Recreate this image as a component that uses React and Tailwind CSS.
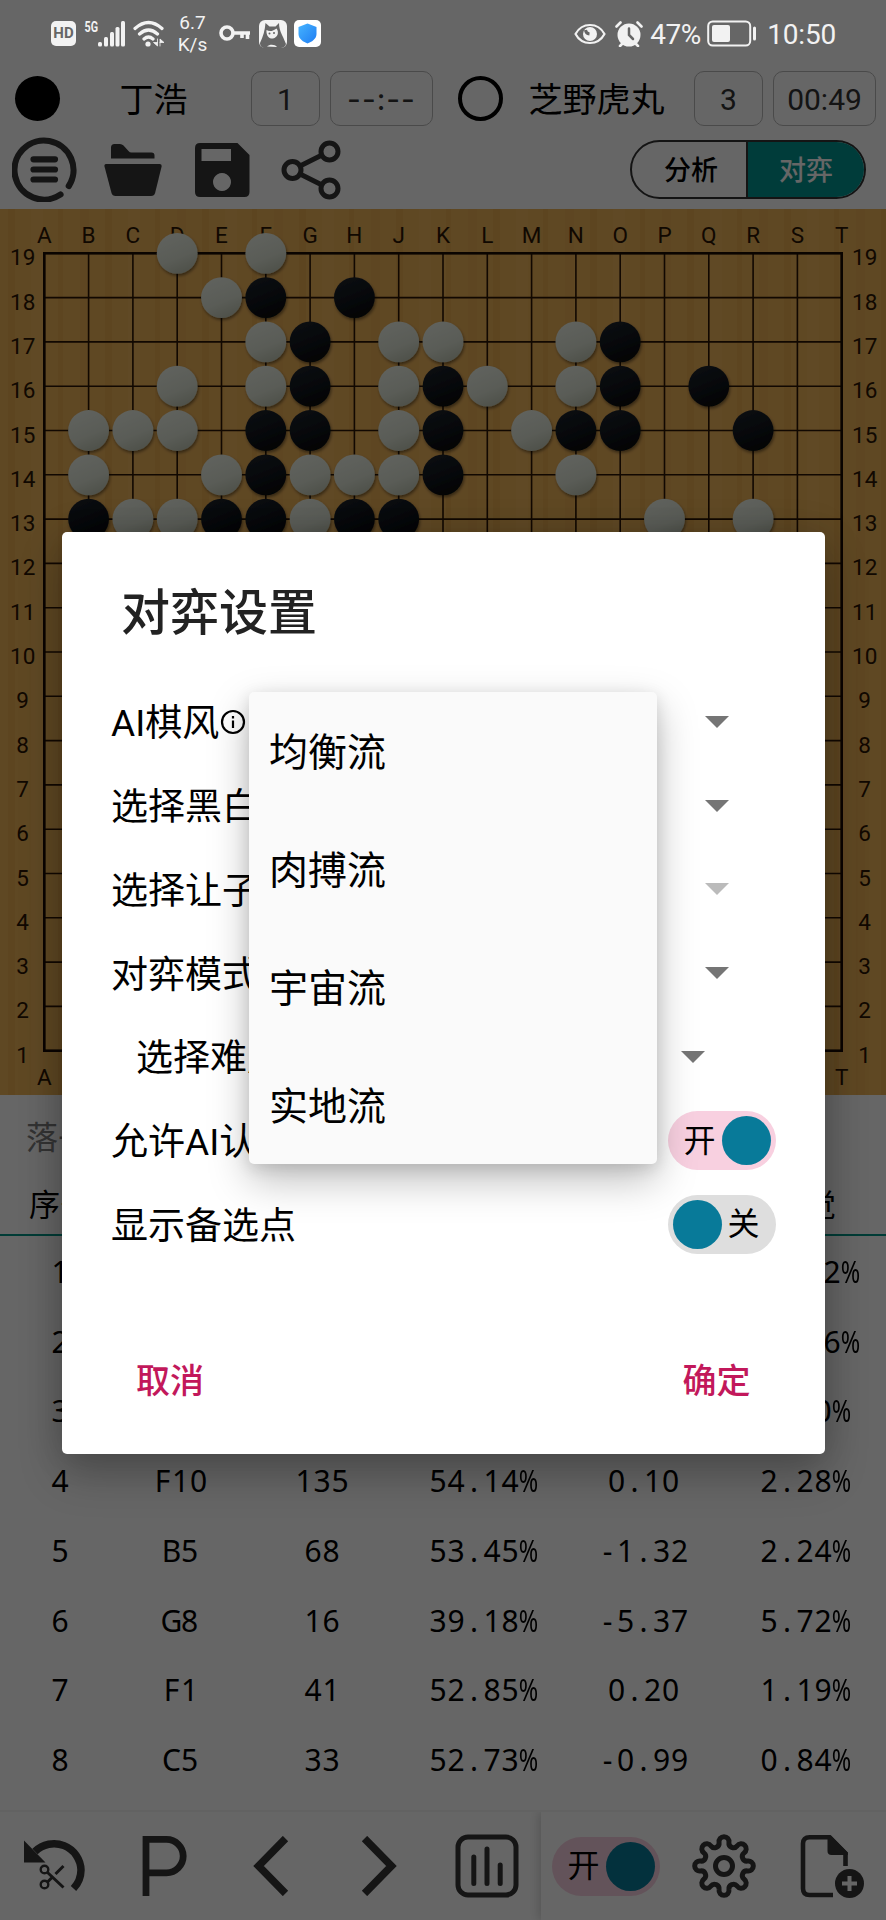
import React from 'react';
import clsx from 'clsx';

const CELL = 44.3;
const COLS = 'ABCDEFGHJKLMNOPQRST'.split('');
const ROWS = Array.from({ length: 19 }, (_, i) => 19 - i);

const STONES = [
  { row: 19, white: 'DF', black: '' },
  { row: 18, white: 'E', black: 'FH' },
  { row: 17, white: 'FJKN', black: 'GO' },
  { row: 16, white: 'DFJLN', black: 'GKOQ' },
  { row: 15, white: 'BCDJM', black: 'FGKNOR' },
  { row: 14, white: 'BEGHJN', black: 'FK' },
  { row: 13, white: 'CDGPR', black: 'BEFHJ' },
];

const MOVES = [
  ['1', '', '', '', '', '12.32%'],
  ['2', '', '', '', '', '10.56%'],
  ['3', '', '', '', '', '3.10%'],
  ['4', 'F10', '135', '54.14%', '0.10', '2.28%'],
  ['5', 'B5', '68', '53.45%', '-1.32', '2.24%'],
  ['6', 'G8', '16', '39.18%', '-5.37', '5.72%'],
  ['7', 'F1', '41', '52.85%', '0.20', '1.19%'],
  ['8', 'C5', '33', '52.73%', '-0.99', '0.84%'],
];

const STYLES = ['均衡流', '肉搏流', '宇宙流', '实地流'];

const StatusBar = () => (
  <div className="relative z-20 h-[66px] flex items-center justify-between pl-[51px] pr-[50px] text-[#f2f2f2]">
    <div className="flex items-center">
      <div className="w-[25px] h-[25px] rounded-[5px] bg-[#f2f2f2] text-[#666] text-[15px] font-bold flex items-center justify-center mt-px">HD</div>
      <svg width="42" height="28" viewBox="0 0 42 28" className="ml-2 mt-px" fill="currentColor">
        <text x="0.5" y="12" fontSize="15" fontWeight="700" textLength="13.5" lengthAdjust="spacingAndGlyphs">5G</text>
        <rect x="14" y="22" width="4" height="4.500" rx="1.500" />
        <rect x="20" y="17" width="4" height="9.500" rx="1.500" />
        <rect x="26" y="12" width="4" height="14.500" rx="1.500" />
        <rect x="31.500" y="7" width="4" height="19.500" rx="1.500" />
        <rect x="37" y="1" width="4" height="25.500" rx="1.500" />
      </svg>
      <svg width="32" height="28" viewBox="0 0 32 28" className="ml-[7px] mt-px" fill="none" stroke="currentColor" strokeWidth="3.200" strokeLinecap="round">
        <path d="M2 8.500Q15.500 -3.500 29 8.500M6.500 14Q15.500 6 24.500 14M11 19Q15.500 15 20 19" />
        <circle cx="15" cy="24" r="2.600" fill="currentColor" stroke="none" />
        <path d="M24.500 19v7l-4-3.500h4M27 26v-7l4 3.500h-4" fill="currentColor" strokeWidth="0.800" />
      </svg>
      <div className="ml-3 mt-[2px] w-[31px] text-center text-[19px] leading-[22px]">
        <div>6.7</div>
        <div>K/s</div>
      </div>
      <svg width="32" height="18" viewBox="0 0 32 18" className="ml-[11px]" fill="none" stroke="currentColor" strokeWidth="3.600">
        <circle cx="8" cy="9" r="6" />
        <path d="M14 9h17M28.500 9v6M23 9v5" />
      </svg>
      <svg width="28" height="28" viewBox="0 0 28 28" className="ml-2 mt-px">
        <rect width="28" height="28" rx="6" fill="#f2f2f2" />
        <path d="M1 23C4 17 6 10 6.500 3l4 3.500h6L20 3c0 4 1 8 3 12s3 7 4 9c-1 3-3 4-5 4H6c-3 0-5-2-5-5z" fill="#666" />
        <path d="M7.500 10c3 2 7 1 10-1.500 3 4 1 9-3.500 10-4 .5-7-3-6.500-8.500z" fill="#f2f2f2" />
        <circle cx="10.500" cy="13.500" r="1" fill="#666" />
        <circle cx="15" cy="13" r="1" fill="#666" />
        <path d="M8 26.500c3-2.500 8-2 10 .5z" fill="#f2f2f2" />
      </svg>
      <div className="ml-[7px] mt-px w-[27px] h-[27px] rounded-[5px] bg-white flex items-center justify-center">
        <svg width="19" height="21" viewBox="0 0 19 21">
          <defs>
            <linearGradient id="shield" x1="0" y1="0" x2="1" y2="1">
              <stop offset="0" stopColor="#46b4ff" />
              <stop offset="1" stopColor="#1f7cf2" />
            </linearGradient>
          </defs>
          <path d="M9.500 0.500L18.500 4v7c0 5-5 8-9 9.500C5.500 19 .5 16 .5 11V4z" fill="url(#shield)" />
        </svg>
      </div>
    </div>

    <div className="flex items-center mt-px">
      <svg width="32" height="22" viewBox="0 0 32 22" fill="none" stroke="currentColor" strokeWidth="2.200" strokeLinejoin="round">
        <path d="M1.500 11C8-1 24-1 30.500 11C24 23 8 23 1.500 11z" />
        <circle cx="16" cy="11" r="7" fill="currentColor" stroke="none" />
        <path d="M11.500 7a4.500 4.500 0 0 0 4 4" stroke="#666" strokeWidth="3" />
      </svg>
      <svg width="28" height="26" viewBox="0 0 28 26" className="ml-[9px]">
        <circle cx="14" cy="14" r="11.500" fill="currentColor" />
        <path d="M1.500 5.500l4-4M26.500 5.500l-4-4M5 25l3-3M23 25l-3-3" stroke="currentColor" strokeWidth="2.600" strokeLinecap="round" />
        <path d="M14 7.500V14l4 4" fill="none" stroke="#666" strokeWidth="2.500" strokeLinecap="round" />
      </svg>
      <span className="ml-[7px] pt-[2px] w-[53px] text-[28px] leading-8 tracking-[-0.5px] whitespace-nowrap">47%</span>
      <svg width="50" height="28" viewBox="0 0 50 28" className="ml-1" fill="none" stroke="currentColor">
        <rect x="1.200" y="1.500" width="42" height="24" rx="4.500" strokeWidth="2" />
        <rect x="5" y="5" width="18" height="17" rx="2" fill="currentColor" stroke="none" />
        <path d="M47.500 8v11" strokeWidth="3" strokeLinecap="round" />
      </svg>
      <span className="ml-[10px] pt-[2px] text-[28px] leading-8 tracking-[-0.2px]">10:50</span>
    </div>
  </div>
);

const Player = ({ black, name, captures, clock }) => (
  <div className="w-1/2 h-full flex items-center pl-[15px] pr-[10px]">
    <div
      className={clsx('w-[45px] h-[45px] rounded-full shrink-0', black ? 'bg-black' : 'border-[4.500px] border-black')}
    />
    <div className="flex-1 pt-[3px] text-center text-[34px] leading-10 text-black pr-1 whitespace-nowrap">{name}</div>
    <div className="shrink-0 w-[69px] h-[55px] rounded-[10px] border border-[#b8b8b8] text-[30px] text-[#333] flex items-center justify-center">
      <span className="pt-[3px]">{captures}</span>
    </div>
    <div className="shrink-0 ml-[10px] w-[103px] h-[55px] rounded-[10px] border border-[#b8b8b8] text-[30px] text-[#333] flex items-center justify-center">
      <span className={clsx('pt-[3px]', clock === '--:--' && 'font-[Inter] tracking-[1px]')}>{clock}</span>
    </div>
  </div>
);

const Toolbar = () => (
  <div className="h-[79px] flex items-center justify-between pl-3 pr-5 text-[#363636]">
    <div className="flex items-center">
      <svg width="65" height="65" viewBox="0 0 65 65" fill="none" stroke="currentColor" strokeWidth="6.200" strokeLinecap="round">
        <path d="M48.500 57.500A29.500 29.500 0 1 1 56.800 49" />
        <path d="M21.500 22.300h21.500M21.500 32.500h21.500M21.500 42.500h21.500" />
      </svg>
      <svg width="58" height="54" viewBox="0 0 58 54" className="ml-[27px]" fill="currentColor">
        <path d="M7 15.500V4.500Q7 1 10.500 1H16q2 0 3.500 1.500L24.500 8q1.200 1.500 3 1.500h20q3 0 3 3v3z" />
        <path d="M2 21h54q2 0 1.600 2.500l-6.500 26.500q-.8 3-4 3H11.500q-3.200 0-4-3L.5 23.500Q0 21 2 21z" />
      </svg>
      <svg width="55" height="54" viewBox="0 0 55 54" className="ml-[33px]" fill="currentColor" fillRule="evenodd">
        <path d="M5 0H42.500L54.500 12V49q0 5-5 5H5q-5 0-5-5V5Q0 0 5 0zM6.500 6V18H36V6zM27 30a9 9 0 1 0 .01 0z" />
      </svg>
      <svg width="60" height="60" viewBox="0 0 60 60" className="ml-[31px]" fill="none" stroke="currentColor" strokeWidth="5">
        <circle cx="11.500" cy="30" r="8.500" />
        <circle cx="48.500" cy="11.500" r="8.500" />
        <circle cx="48.500" cy="48.500" r="8.500" />
        <path d="M19 26L41 15M19 34L41 45" />
      </svg>
    </div>
    <div className="w-[236px] h-[59px] rounded-full border-2 border-[#333] overflow-hidden flex text-[27px] font-medium">
      <div className="w-[116px] pt-1 flex items-center justify-center text-black border-r-2 border-[#333] pl-1">分析</div>
      <div className="flex-1 pt-1 flex items-center justify-center bg-[#009692] text-white">对弈</div>
    </div>
  </div>
);

const colX = (i) => CELL * (i + 1);

const Stone = ({ col, row, color }) => (
  <circle
    cx={colX(COLS.indexOf(col))}
    cy={CELL * (20 - row)}
    r="20.4"
    fill={color === 'white' ? 'url(#whiteStone)' : 'url(#blackStone)'}
    filter="url(#stoneShadow)"
  />
);

const Board = () => (
  <svg width="886" height="886" viewBox="0 0 886 886" className="block" fontSize="22.5" textAnchor="middle">
    <defs>
      <linearGradient id="whiteStone" x1="0.3" y1="0" x2="0.7" y2="1">
        <stop offset="0" stopColor="#f0f5ea" />
        <stop offset="0.6" stopColor="#e0e6d8" />
        <stop offset="1" stopColor="#c2c8b6" />
      </linearGradient>
      <linearGradient id="blackStone" x1="0.3" y1="0" x2="0.7" y2="1">
        <stop offset="0" stopColor="#1d232b" />
        <stop offset="0.6" stopColor="#10151b" />
        <stop offset="1" stopColor="#05070a" />
      </linearGradient>
      <filter id="stoneShadow" x="-20%" y="-20%" width="150%" height="150%">
        <feDropShadow dx="1" dy="2" stdDeviation="1.5" floodColor="#000" floodOpacity="0.45" />
      </filter>
      <pattern id="grain" width="97" height="886" patternUnits="userSpaceOnUse">
        <rect width="97" height="886" fill="#eeb359" />
        <rect x="8" width="7" height="886" fill="#e9ad52" />
        <rect x="31" width="12" height="886" fill="#f0b65e" />
        <rect x="58" width="5" height="886" fill="#e8ac52" />
        <rect x="80" width="9" height="886" fill="#ebb056" />
      </pattern>
    </defs>
    <rect width="886" height="886" fill="url(#grain)" />
    {COLS.map((c, i) => (
      <g key={c}>
        <path d={`M${colX(i)} 44.300V841.700M44.300 ${colX(i)}H841.700`} stroke="#2b1503" strokeWidth="1.6" />
        <text x={colX(i)} y="34" fill="#2b1503">{c}</text>
        <text x={colX(i)} y="876" fill="#2b1503">{c}</text>
      </g>
    ))}
    <rect x="44.3" y="44.3" width="797.4" height="797.4" fill="none" stroke="#1a0c02" strokeWidth="2.6" />
    {ROWS.map((n, i) => (
      <g key={n} fill="#2b1503">
        <text x="22.7" y={colX(i) + 12}>{n}</text>
        <text x="864.7" y={colX(i) + 12}>{n}</text>
      </g>
    ))}
    {STONES.map(({ row, white, black }) => (
      <g key={row}>
        {white.split('').map((c) => <Stone key={c} col={c} row={row} color="white" />)}
        {black.split('').map((c) => <Stone key={c} col={c} row={row} color="black" />)}
      </g>
    ))}
  </svg>
);

// Fixed-pitch text: every character sits in a cell of the same width
const Mono = ({ children }) => (
  <span className="inline-flex">
    {children.split('').map((ch, i) => (
      <span key={i} className="w-[18px] inline-flex justify-center">
        <span className={clsx(ch === '%' && 'scale-x-[0.78]')}>{ch}</span>
      </span>
    ))}
  </span>
);

const TABLE_GRID = 'grid grid-cols-[120px_121px_162px_160px_161px_162px]';

const MoveTable = () => (
  <div className="h-[715px] text-black">
    <div className="h-[82px] pt-[3px] flex items-center pl-[26px] text-[32px] text-[#808080]">落子</div>
    <div className={clsx(TABLE_GRID, 'h-[59px] items-center border-b-2 border-[#009688] text-center text-[31px] leading-none')}>
      <div>序号</div>
      <div className="col-start-6">直觉</div>
    </div>
    {MOVES.map((row) => (
      <div key={row[0]} className={clsx(TABLE_GRID, "h-[69.75px] pt-[2px] items-center text-center text-[30px] leading-none font-['Noto_Sans']")}>
        {row.map((cell, i) => (
          <div key={i}><Mono>{cell}</Mono></div>
        ))}
      </div>
    ))}
  </div>
);

const Toggle = ({ on }) => (
  <div
    className={clsx(
      'w-[108px] h-[59px] rounded-full flex items-center justify-between text-[32px] leading-none text-black',
      on ? 'bg-[#f8d0e0] pl-[16px] pr-[5px]' : 'bg-[#dedede] pl-[5px] pr-[16px]'
    )}
  >
    {on && <span>开</span>}
    <div className="w-[49px] h-[49px] rounded-full bg-[#087a99]" />
    {!on && <span>关</span>}
  </div>
);

// One lobe and one valley of the outline, turned eight times
const gearPath = () => {
  const turn = (x, y, k) => {
    const a = (k * Math.PI) / 4;
    return `${(x * Math.cos(a) - y * Math.sin(a)).toFixed(2)} ${(x * Math.sin(a) + y * Math.cos(a)).toFixed(2)}`;
  };
  let d = `M${turn(23.48, -4.93, 0)}`;
  for (let k = 0; k < 8; k++) {
    d += `A5 5 0 1 1 ${turn(23.48, 4.93, k)}A4.600 4.600 0 0 0 ${turn(23.48, -4.93, k + 1)}`;
  }
  return `${d}Z`;
};

const BottomBar = () => (
  <div className="h-[110px] flex border-t-2 border-[#f4f4f4] text-[#363636] overflow-hidden">
    <div className="w-[541px] flex items-center">
      <div className="w-[108px] flex justify-center">
        <svg width="62" height="56" viewBox="0 0 62 56" fill="none" stroke="currentColor">
          <path d="M12 13.500A27 27 0 0 1 58 32A27 27 0 0 1 50.500 50.500" strokeWidth="7.500" />
          <path d="M1 2.500V24.500H22.500z" fill="currentColor" stroke="none" />
          <circle cx="21.500" cy="31.500" r="3.800" strokeWidth="2.400" />
          <circle cx="21.500" cy="46.500" r="3.800" strokeWidth="2.400" />
          <path d="M24 34L40.500 49.500M24 44.500L29 39.500M32.500 36L40.500 28" strokeWidth="3" />
        </svg>
      </div>
      <div className="w-[110px] pl-[3px] flex justify-center">
        <svg width="45" height="60" viewBox="0 0 45 60" fill="none" stroke="currentColor" strokeWidth="6.800">
          <path d="M4 60V3.400H24.500a16.600 16.600 0 0 1 0 33.400H4" />
        </svg>
      </div>
      <div className="w-[106px] flex justify-center">
        <svg width="36" height="60" viewBox="0 0 36 60" fill="none" stroke="currentColor" strokeWidth="7.500">
          <path d="M32.500 2.500L5.500 30L32.500 57.500" />
        </svg>
      </div>
      <div className="w-[109px] flex justify-center">
        <svg width="36" height="60" viewBox="0 0 36 60" fill="none" stroke="currentColor" strokeWidth="7.500">
          <path d="M3.500 2.500L30.500 30L3.500 57.500" />
        </svg>
      </div>
      <div className="w-[108px] flex justify-center">
        <svg width="64" height="64" viewBox="0 0 64 64" fill="none" stroke="currentColor" strokeWidth="5" strokeLinecap="round">
          <rect x="3" y="3" width="58" height="58" rx="10" />
          <path d="M18.800 23v26.500M32 15v34.500M45.200 31v18.500" />
        </svg>
      </div>
    </div>
    <div className="flex-1 flex items-center shadow-[-2px_0_10px_rgba(0,0,0,0.18)]">
      <div className="w-[129px] flex justify-center">
        <Toggle on />
      </div>
      <div className="w-[108px] flex justify-center">
        <svg width="64" height="64" viewBox="-32 -32 64 64" fill="none" stroke="currentColor" strokeWidth="5">
          <path d={gearPath()} />
          <circle r="8.500" />
        </svg>
      </div>
      <div className="w-[108px] flex justify-center">
        <svg width="64" height="64" viewBox="0 0 64 64" fill="none" stroke="currentColor" strokeWidth="4.600">
          <path d="M45.500 32V19.500L29.500 3.300H9.500Q3 3.300 3 9.500V54.500Q3 61 9.500 61H33" />
          <path d="M27.500 1.500H31L47.800 18.500V21H31.500q-4 0-4-4z" fill="currentColor" stroke="none" />
          <circle cx="49.500" cy="49.500" r="14.500" fill="currentColor" stroke="none" />
          <path d="M49.500 42v15M42 49.500h15" stroke="#fff" strokeWidth="4" />
        </svg>
      </div>
    </div>
  </div>
);

const Caret = ({ disabled }) => (
  <svg width="24" height="12" viewBox="0 0 24 12" className={disabled ? 'text-[#bbb]' : 'text-[#757575]'}>
    <path d="M0 0H24L12 12z" fill="currentColor" />
  </svg>
);

const SettingRow = ({ label, nested, children }) => (
  <div className={clsx('h-[83.75px] flex items-center justify-between', nested && 'px-[25px]')}>
    <div className="pt-[5px] flex items-center whitespace-nowrap">{label}</div>
    {children}
  </div>
);

const SettingsDialog = () => (
  <div className="absolute left-[62px] top-[532px] w-[762.500px] h-[922px] rounded-[5px] bg-white shadow-[0_20px_44px_rgba(0,0,0,0.24),0_0_36px_rgba(0,0,0,0.14)]">
    <h2 className="pt-[52px] pl-[59px] text-[49px] leading-[60px] font-medium text-[#222]">对弈设置</h2>
    <div className="mt-[36px] pl-[49px] pr-[49px] text-[37px] leading-[48px] text-black">
      <SettingRow
        label={
          <>
            AI棋风
            <svg width="26" height="26" viewBox="0 0 26 26" className="ml-px mb-[5px]" fill="none" stroke="currentColor" strokeWidth="2.200">
              <circle cx="13" cy="13" r="11" />
              <path d="M13 11.500V19M13 7v2.500" />
            </svg>
          </>
        }
      >
        <div className="mr-[47px]"><Caret /></div>
      </SettingRow>
      <SettingRow label="选择黑白"><div className="mr-[47px]"><Caret /></div></SettingRow>
      <SettingRow label="选择让子"><div className="mr-[47px]"><Caret disabled /></div></SettingRow>
      <SettingRow label="对弈模式"><div className="mr-[47px]"><Caret /></div></SettingRow>
      <SettingRow label="选择难度" nested><div className="mr-[46px]"><Caret /></div></SettingRow>
      <SettingRow label="允许AI认输"><Toggle on /></SettingRow>
      <SettingRow label="显示备选点"><Toggle /></SettingRow>
    </div>
    <div className="mt-[91px] px-[74px] flex justify-between text-[34px] leading-[48px] font-medium text-[#c2185b]">
      <button>取消</button>
      <button>确定</button>
    </div>
  </div>
);

const StyleMenu = () => (
  <div className="absolute left-[249px] top-[692px] w-[408px] h-[472px] rounded-[5px] bg-[#fafafa] shadow-[0_16px_40px_rgba(0,0,0,0.26),0_4px_16px_rgba(0,0,0,0.12)]">
    {STYLES.map((s) => (
      <div key={s} className="h-[118px] pt-[5px] flex items-center pl-5 text-[39px] text-black">{s}</div>
    ))}
  </div>
);

const App = () => {
  return (
    <div className="relative w-[886px] h-[1920px] overflow-hidden bg-white font-[Roboto,'Noto_Sans_CJK_SC',sans-serif]">
      <StatusBar />
      <div className="h-16 flex items-center">
        <Player black name="丁浩" captures="1" clock="--:--" />
        <Player name="芝野虎丸" captures="3" clock="00:49" />
      </div>
      <Toolbar />
      <Board />
      <MoveTable />
      <BottomBar />

      <div className="absolute inset-0 z-10 bg-black/60" />
      <div className="absolute inset-0 z-30">
        <SettingsDialog />
        <StyleMenu />
      </div>
    </div>
  );
};

export default App;
